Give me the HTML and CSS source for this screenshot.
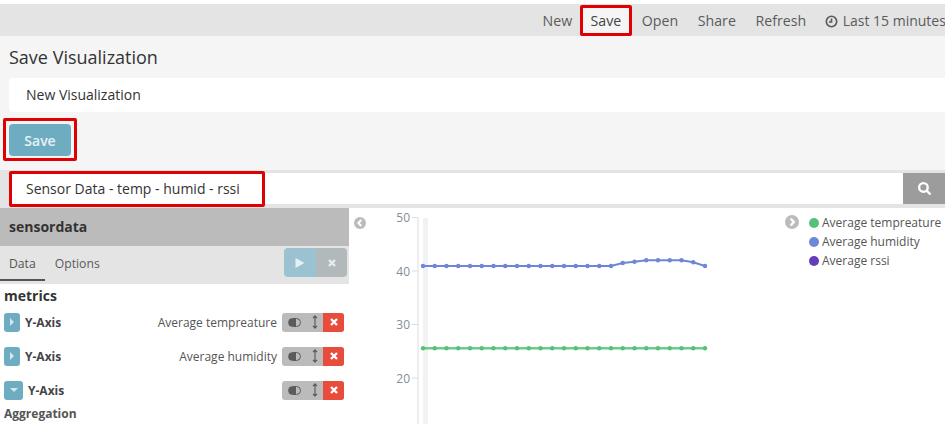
FILE: index.html
```html
<!DOCTYPE html>
<html lang="en">
<head>
    <meta charset="UTF-8">
    <title>Save Visualization</title>
    <link rel="stylesheet" href="styles.css">
</head>
<body>
    <nav class="topbar">
        <a class="nav-link">New</a>
        <a class="nav-link nav-active">Save</a>
        <a class="nav-link">Open</a>
        <a class="nav-link">Share</a>
        <a class="nav-link">Refresh</a>
        <a class="nav-link nav-time">
            <svg class="clock" viewBox="0 0 12 12"><circle cx="6" cy="6" r="4.8"/><path d="M6 3.200V6.500H3.600"/></svg>
            Last 15 minutes
        </a>
    </nav>

    <section class="save-panel">
        <h1>Save Visualization</h1>
        <div class="name-input">New Visualization</div>
        <div class="save-highlight"><button class="save-btn">Save</button></div>
    </section>

    <div class="search-row">
        <div class="search-input">
            <span class="search-title">Sensor Data - temp - humid - rssi</span>
        </div>
        <button class="search-btn">
            <svg viewBox="0 0 14 14"><circle cx="6" cy="6" r="4"/><path d="M9 9l3.600 3.600"/></svg>
        </button>
    </div>

    <main class="editor">
        <aside class="sidebar">
            <div class="index-name">sensordata</div>
            <div class="tabs">
                <a class="tab tab-active">Data</a>
                <a class="tab">Options</a>
                <div class="tab-actions">
                    <button class="apply-btn"><svg viewBox="0 0 12 12"><path d="M1.500 1v10l9-5z"/></svg></button>
                    <button class="discard-btn"><svg class="cross" viewBox="0 0 10 10"><path d="M2 2l6 6M8 2l-6 6"/></svg></button>
                </div>
            </div>
            <div class="metrics">
                <h2>metrics</h2>
                <div class="metric-row">
                    <span class="caret"><svg viewBox="0 0 6 8"><path d="M1 0l4 4-4 4z"/></svg></span>
                    <b>Y-Axis</b>
                    <span class="metric-label">Average tempreature</span>
                    <div class="metric-tools">
                        <span class="tool"><i class="toggle"></i></span>
                        <span class="tool"><svg class="arrows" viewBox="0 0 6 14"><path d="M3 1v12M1 3.200L3 1l2 2.200M1 10.800L3 13l2-2.200"/></svg></span>
                        <span class="tool tool-remove"><svg class="cross" viewBox="0 0 10 10"><path d="M2 2l6 6M8 2l-6 6"/></svg></span>
                    </div>
                </div>
                <div class="metric-row">
                    <span class="caret"><svg viewBox="0 0 6 8"><path d="M1 0l4 4-4 4z"/></svg></span>
                    <b>Y-Axis</b>
                    <span class="metric-label">Average humidity</span>
                    <div class="metric-tools">
                        <span class="tool"><i class="toggle"></i></span>
                        <span class="tool"><svg class="arrows" viewBox="0 0 6 14"><path d="M3 1v12M1 3.200L3 1l2 2.200M1 10.800L3 13l2-2.200"/></svg></span>
                        <span class="tool tool-remove"><svg class="cross" viewBox="0 0 10 10"><path d="M2 2l6 6M8 2l-6 6"/></svg></span>
                    </div>
                </div>
                <div class="metric-row">
                    <span class="caret caret-open"><svg viewBox="0 0 8 6"><path d="M0 1h8L4 5z"/></svg></span>
                    <b>Y-Axis</b>
                    <span class="metric-label"></span>
                    <div class="metric-tools">
                        <span class="tool"><i class="toggle"></i></span>
                        <span class="tool"><svg class="arrows" viewBox="0 0 6 14"><path d="M3 1v12M1 3.200L3 1l2 2.200M1 10.800L3 13l2-2.200"/></svg></span>
                        <span class="tool tool-remove"><svg class="cross" viewBox="0 0 10 10"><path d="M2 2l6 6M8 2l-6 6"/></svg></span>
                    </div>
                </div>
                <div class="agg-label">Aggregation</div>
            </div>
        </aside>

        <div class="chart-pane">
            <svg class="collapse-icon collapse-left" viewBox="0 0 12 12"><circle cx="6" cy="6" r="6"/><path d="M7.200 3L4.400 6l2.800 3"/></svg>
            <svg class="chart" width="424" height="216" viewBox="0 0 424 216">
                <defs>
                    <marker id="dotBlue" markerUnits="userSpaceOnUse" markerWidth="6" markerHeight="6" refX="3" refY="3"><circle cx="3" cy="3" r="2.200" fill="#6e85d8"/></marker>
                    <marker id="dotGreen" markerUnits="userSpaceOnUse" markerWidth="6" markerHeight="6" refX="3" refY="3"><circle cx="3" cy="3" r="2.200" fill="#57c17b"/></marker>
                </defs>
                <rect x="73" y="10" width="5" height="206" fill="#f2f2f2"/>
                <path class="axis" d="M68 9.500V216M62 9.500h6M62 63h6M62 116.500h6M62 170h6"/>
                <text class="tick" x="60" y="14">50</text>
                <text class="tick" x="60" y="68">40</text>
                <text class="tick" x="60" y="121">30</text>
                <text class="tick" x="60" y="175">20</text>
                <polyline class="line line-blue" points="73,58 84.750,58 96.500,58 108.250,58 120,58 131.750,58 143.500,58 155.250,58 167,58 178.750,58 190.500,58 202.250,58 214,58 225.750,58 237.500,58 249.250,58 261,58 272.750,55 284.500,53.700 296.250,52.300 308,52.300 319.750,52.300 331.500,52.300 343.250,54.300 355,58"/>
                <polyline class="line line-green" points="73,140.300 84.750,140.300 96.500,140.300 108.250,140.300 120,140.300 131.750,140.300 143.500,140.300 155.250,140.300 167,140.300 178.750,140.300 190.500,140.300 202.250,140.300 214,140.300 225.750,140.300 237.500,140.300 249.250,140.300 261,140.300 272.750,140.300 284.500,140.300 296.250,140.300 308,140.300 319.750,140.300 331.500,140.300 343.250,140.300 355,140.300"/>
            </svg>
            <div class="legend">
                <svg class="collapse-icon" viewBox="0 0 12 12"><circle cx="6" cy="6" r="6"/><path d="M4.800 3l2.800 3-2.800 3"/></svg>
                <ul class="legend-list">
                    <li><i class="dot dot-green"></i>Average tempreature</li>
                    <li><i class="dot dot-blue"></i>Average humidity</li>
                    <li><i class="dot dot-purple"></i>Average rssi</li>
                </ul>
            </div>
        </div>
    </main>
</body>
</html>
```

FILE: styles.css
```css
* {
    box-sizing: border-box;
}

html, body {
    height: 424px;
    overflow: hidden;
}

body {
    margin: 0;
    padding-top: 4px;
    font-family: "Open Sans", "Liberation Sans", sans-serif;
    font-size: 14px;
    color: #444;
    background-color: #fff;
}

.topbar {
    display: flex;
    justify-content: flex-end;
    align-items: center;
    height: 32px;
    font-size: 14.200px;
    background-color: #e4e4e4;
    white-space: nowrap;
}

.nav-link {
    height: 31px;
    line-height: 31px;
    padding: 0 9.800px;
    color: #5b5b5b;
}

.nav-active {
    width: 52px;
    margin-left: -2px;
    padding: 0;
    line-height: 25px;
    text-align: center;
    color: #444;
    background-color: #f5f5f5;
    border: 3px solid #e00000;
    border-radius: 2px;
}

.nav-time {
    width: 129px;
    padding: 0 0 0 9px;
    font-size: 14px;
}

.clock {
    width: 13px;
    height: 13px;
    margin-right: 1px;
    vertical-align: -2px;
    fill: none;
    stroke: #5b5b5b;
    stroke-width: 1.500;
}

.save-panel {
    height: 134px;
    padding: 10px 0 0;
    background-color: #f5f5f5;
}

h1 {
    margin: 0 0 10px 9px;
    height: 22px;
    font-size: 18px;
    font-weight: 400;
    line-height: 22px;
    color: #333;
}

.name-input {
    height: 34px;
    margin-left: 9px;
    padding-left: 17px;
    line-height: 34px;
    color: #333;
    background-color: #fff;
    border-radius: 4px 0 0 4px;
}

.save-highlight {
    width: 74px;
    height: 43px;
    margin: 6px 0 0 3px;
    padding: 3px;
    border: 3px solid #e00000;
    border-radius: 2px;
}

.save-btn {
    display: block;
    width: 62px;
    height: 32px;
    padding: 0;
    font-family: inherit;
    font-size: 14px;
    font-weight: 600;
    color: #e8f2f6;
    background-color: #6eadc1;
    border: 0;
    border-radius: 4px;
}

.search-row {
    display: flex;
    height: 38px;
    padding: 3px 0 4px 9px;
    background-color: #e4e4e4;
}

.search-input {
    flex: 1;
    background-color: #fff;
}

.search-title {
    display: block;
    width: 256px;
    height: 36px;
    margin-top: -2px;
    padding-left: 14px;
    line-height: 30px;
    color: #333;
    background-color: #fff;
    border: 3px solid #e00000;
    border-radius: 2px;
}

.search-btn {
    width: 42px;
    padding: 0;
    background-color: #9c9c9c;
    border: 0;
}

.search-btn svg {
    display: block;
    width: 15px;
    height: 15px;
    margin: auto;
    fill: none;
    stroke: #fff;
    stroke-width: 2.200;
}

.editor {
    display: flex;
    height: 216px;
}

.sidebar {
    flex: none;
    width: 349px;
}

.index-name {
    height: 38px;
    padding-left: 9px;
    font-weight: 700;
    line-height: 38px;
    color: #333;
    background-color: #bbb;
}

.tabs {
    display: flex;
    height: 38px;
    background-color: #e4e4e4;
    font-size: 12.200px;
}

.tab {
    height: 35px;
    padding: 0 10px;
    line-height: 36px;
    color: #5b5b5b;
}

.tab-active {
    padding: 0 9px;
    color: #555;
    border-bottom: 2px solid #555;
}

.tab-actions {
    display: flex;
    height: 29px;
    margin: 2px 2px 0 auto;
}

.apply-btn, .discard-btn {
    width: 32px;
    padding: 0;
    border: 0;
}

.apply-btn {
    background-color: #9ac2d1;
    border-radius: 4px 0 0 4px;
}

.apply-btn svg {
    display: block;
    width: 12px;
    height: 12px;
    margin: auto;
    fill: #e6f0f4;
}

.discard-btn {
    width: 31px;
    background-color: #b1b9ba;
    border-radius: 0 4px 4px 0;
}

.cross {
    display: block;
    width: 10px;
    height: 10px;
    margin: auto;
    fill: none;
    stroke: #fff;
    stroke-width: 2.400;
}

.discard-btn .cross {
    stroke: #e6eced;
}

.metrics {
    padding: 0 4px;
}

h2 {
    margin: 2px 0 0;
    height: 19px;
    font-size: 14px;
    font-weight: 700;
    line-height: 19px;
    color: #333;
}

.metric-row {
    display: flex;
    align-items: center;
    height: 34px;
    font-size: 12px;
}

.metric-row b {
    margin-left: 5px;
    color: #444;
}

.caret {
    display: flex;
    align-items: center;
    justify-content: center;
    width: 16px;
    height: 19px;
    background-color: #6eadc1;
    border-radius: 3px;
}

.caret svg {
    width: 6px;
    height: 8px;
    fill: #d5e6ec;
}

.caret-open {
    width: 19px;
}

.caret-open svg {
    width: 8px;
    height: 6px;
}

.metric-label {
    margin-left: auto;
    padding-right: 5px;
    color: #555;
}

.metric-tools {
    display: flex;
    width: 62px;
    height: 19px;
    margin-right: 1px;
    background-color: #bbb;
    border-radius: 3px;
    overflow: hidden;
}

.tool {
    display: flex;
    align-items: center;
    justify-content: center;
    flex: 1;
}

.tool:first-child {
    flex: 0 0 25px;
}

.tool-remove {
    flex: 0 0 21px;
    background-color: #e74c3c;
}

.toggle {
    display: block;
    width: 13px;
    height: 9px;
    border-radius: 5px;
    border: 1px solid #5b5b5b;
    background: linear-gradient(90deg, #5b5b5b 65%, transparent 65%);
}

.arrows {
    width: 6px;
    height: 14px;
    fill: none;
    stroke: #5b5b5b;
    stroke-width: 1.200;
}

.agg-label {
    margin-top: -3px;
    font-size: 12px;
    font-weight: 700;
    line-height: 20px;
    color: #555;
}

.chart-pane {
    position: relative;
    display: flex;
    flex: 1;
    min-width: 0;
    padding-left: 1px;
}

.collapse-icon {
    flex: none;
    width: 12px;
    height: 12px;
    fill: #bbb;
}

.collapse-left {
    position: absolute;
    top: 9px;
    left: 5px;
}

.collapse-icon path {
    fill: none;
    stroke: #fff;
    stroke-width: 2;
}

.chart {
    flex: none;
    display: block;
}

.axis {
    fill: none;
    stroke: #ddd;
}

.tick {
    font-size: 12px;
    text-anchor: end;
    fill: #848e96;
}

.line {
    fill: none;
    stroke-width: 2;
}

.line-blue {
    stroke: #6e85d8;
    marker-start: url(#dotBlue);
    marker-mid: url(#dotBlue);
    marker-end: url(#dotBlue);
}

.line-green {
    stroke: #57c17b;
    stroke-width: 2.500;
    stroke-opacity: 0.85;
    marker-start: url(#dotGreen);
    marker-mid: url(#dotGreen);
    marker-end: url(#dotGreen);
}

.legend {
    display: flex;
    flex: none;
    margin-left: 11px;
    padding-top: 5px;
}

.legend .collapse-icon {
    width: 14px;
    height: 14px;
    margin: 2px 10px 0 0;
}

.legend-list {
    margin: 0;
    padding: 0;
    list-style: none;
    font-size: 12px;
    line-height: 19px;
    color: #555;
    white-space: nowrap;
}

.dot {
    display: inline-block;
    width: 10px;
    height: 10px;
    margin-right: 3px;
    vertical-align: -1px;
    border-radius: 50%;
}

.dot-green {
    background-color: #57c17b;
}

.dot-blue {
    background-color: #6f87d8;
}

.dot-purple {
    background-color: #663db8;
}
```
